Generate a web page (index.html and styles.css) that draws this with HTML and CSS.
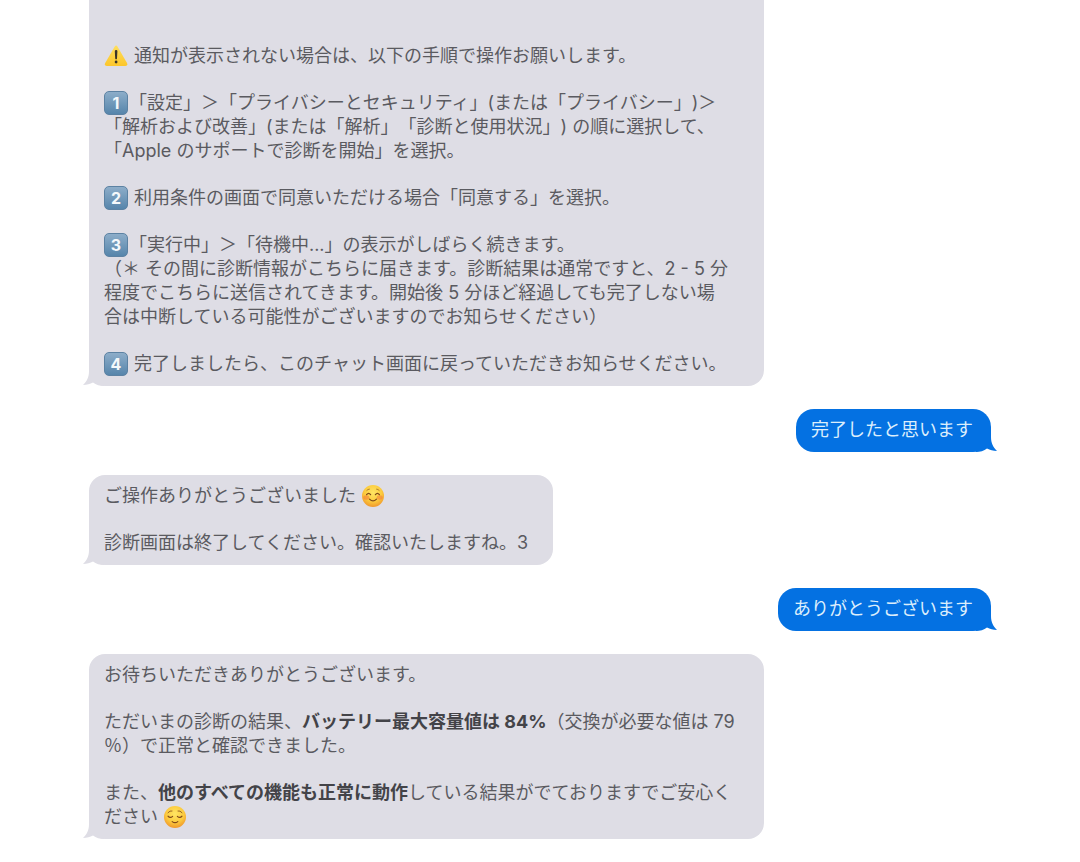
FILE: index.html
```html
<!DOCTYPE html>
<html lang="ja">
<head>
    <meta charset="utf-8">
    <meta name="viewport" content="width=device-width, initial-scale=1">
    <title>チャット</title>
    <link rel="stylesheet" href="styles.css">
</head>
<body>
    <!-- shared shapes -->
    <svg class="defs" width="0" height="0" aria-hidden="true">
        <defs>
            <radialGradient id="face" cx="50%" cy="35%" r="65%">
                <stop offset="0" stop-color="#ffe564"/>
                <stop offset="0.6" stop-color="#fccb3e"/>
                <stop offset="1" stop-color="#f0982c"/>
            </radialGradient>
            <linearGradient id="warn" x1="0" y1="0" x2="0" y2="1">
                <stop offset="0" stop-color="#ffdf5e"/>
                <stop offset="1" stop-color="#fcc62b"/>
            </linearGradient>
            <symbol id="tail" viewBox="0 0 22 24">
                <path d="M7 0V9C7 15 5 19 1 23C5 23 8 22 11 20.5C14 23 18 24 22 24V0Z"/>
            </symbol>
        </defs>
    </svg>

    <main class="chat">
        <div class="bubble received wide continued">
            <p><svg class="emoji" viewBox="0 0 24 24" role="img" aria-label="注意"><path d="M10.6 2.8Q12.1 0.4 13.6 2.8L23 19Q24.2 21.8 21.4 21.9H2.8Q0 21.8 1.2 19Z" fill="url(#warn)"/><path d="M10.8 7.2Q10.7 6 12.1 6T13.4 7.2L13 14.4Q12.9 15.3 12.1 15.3T11.2 14.4Z" fill="#3b3428"/><circle cx="12.1" cy="18" r="1.4" fill="#3b3428"/></svg> 通知が表示されない場合は、以下の手順で操作お願いします。</p>
            <p><span class="keycap">1</span>「設定」＞「プライバシーとセキュリティ」(または「プライバシー」)＞<br>「解析および改善」(または「解析」「診断と使用状況」) の順に選択して、<br>「Apple のサポートで診断を開始」を選択。</p>
            <p><span class="keycap">2</span> 利用条件の画面で同意いただける場合「同意する」を選択。</p>
            <p><span class="keycap">3</span>「実行中」＞「待機中...」の表示がしばらく続きます。<br>（＊ その間に診断情報がこちらに届きます。診断結果は通常ですと、2 - 5 分<br>程度でこちらに送信されてきます。開始後 5 分ほど経過しても完了しない場<br>合は中断している可能性がございますのでお知らせください）</p>
            <p><span class="keycap">4</span> 完了しましたら、このチャット画面に戻っていただきお知らせください。</p>
            <svg class="tail" aria-hidden="true"><use href="#tail"/></svg>
        </div>

        <div class="bubble sent">
            <p>完了したと思います</p>
            <svg class="tail" aria-hidden="true"><use href="#tail"/></svg>
        </div>

        <div class="bubble received">
            <p>ご操作ありがとうございました <svg class="emoji" viewBox="0 0 24 24" role="img" aria-label="笑顔"><circle cx="12" cy="12" r="11" fill="url(#face)"/><g fill="#f4743b" opacity="0.5"><ellipse cx="5.3" cy="13.5" rx="3" ry="2.2"/><ellipse cx="18.7" cy="13.5" rx="3" ry="2.2"/></g><g fill="none" stroke="#80491a" stroke-width="1.2" stroke-linecap="round"><path d="M5.6 10.7Q7.6 7.9 9.6 10.7M14.4 10.7Q16.4 7.9 18.4 10.7M8.5 15.1Q12 18.8 15.5 15.1"/><path d="M5.8 6.4Q6.8 5.1 8.4 5.1M15.6 5.1Q17.2 5.1 18.2 6.4" stroke-width="0.6"/></g></svg></p>
            <p>診断画面は終了してください。確認いたしますね。3</p>
            <svg class="tail" aria-hidden="true"><use href="#tail"/></svg>
        </div>

        <div class="bubble sent">
            <p>ありがとうございます</p>
            <svg class="tail" aria-hidden="true"><use href="#tail"/></svg>
        </div>

        <div class="bubble received wide">
            <p>お待ちいただきありがとうございます。</p>
            <p>ただいまの診断の結果、<strong>バッテリー最大容量値は 84%</strong>（交換が必要な値は 79<br>％）で正常と確認できました。</p>
            <p>また、<strong>他のすべての機能も正常に動作</strong>している結果がでておりますでご安心く<br>ださい <svg class="emoji" viewBox="0 0 24 24" role="img" aria-label="ほっとした顔"><circle cx="12" cy="12" r="11" fill="url(#face)"/><g fill="none" stroke="#80491a" stroke-width="1.2" stroke-linecap="round"><path d="M5 11.1Q7.2 13.7 9.6 11.3M14.4 11.3Q16.8 13.7 19 11.1M9.2 16.6Q12 18.8 14.8 16.6"/><path d="M5 7.7Q7 5.3 9 5.9M15 5.9Q17 5.3 19 7.7" stroke-width="0.8"/></g></svg></p>
            <svg class="tail" aria-hidden="true"><use href="#tail"/></svg>
        </div>
    </main>
</body>
</html>
```
FILE: styles.css
```css
body {
    margin: 0;
    background: #fff;
    font-family: Inter, "Noto Sans CJK JP", sans-serif;
    font-size: 18px;
    line-height: 24px;
    text-spacing-trim: space-all;
}

.defs { position: absolute; }

.chat {
    display: flex;
    flex-direction: column;
    gap: 23px;
    padding: 0 89px 23px;
}

.bubble {
    position: relative;
    box-sizing: border-box;
    max-width: 100%;
    padding: 9px 18px 10px 15px;
    border-radius: 16px;
}
.bubble p { margin: 0; }
.bubble p + p { margin-top: 23px; }

.received {
    align-self: flex-start;
    padding-right: 25px;
    background: #dedde5;
    color: #5a5a60;
}
.received strong { color: #434348; }

.sent {
    align-self: flex-end;
    border-radius: 18px;
    background: #0471e2;
    color: #dceefc;
}

.wide { width: 675px; }

/* the start of this message is scrolled out of view */
.continued {
    padding-top: 44px;
    border-top-left-radius: 0;
    border-top-right-radius: 0;
}

.tail {
    position: absolute;
    bottom: 0;
    left: -7px;
    width: 22px;
    height: 24px;
    fill: #dedde5;
}
.sent .tail {
    left: auto;
    right: -7px;
    fill: #0471e2;
    transform: scaleX(-1);
}

.emoji {
    width: 24px;
    height: 24px;
    margin-right: 1px;
    vertical-align: top;
}

.keycap {
    display: inline-block;
    box-sizing: border-box;
    width: 24px;
    height: 24px;
    margin-right: 1px;
    border: 1px solid #5c82a3;
    border-radius: 5px;
    background: linear-gradient(#8dadc9, #5685ab);
    color: #f4f8fb;
    font-size: 16px;
    font-weight: 700;
    line-height: 22px;
    text-align: center;
    vertical-align: top;
}
```
